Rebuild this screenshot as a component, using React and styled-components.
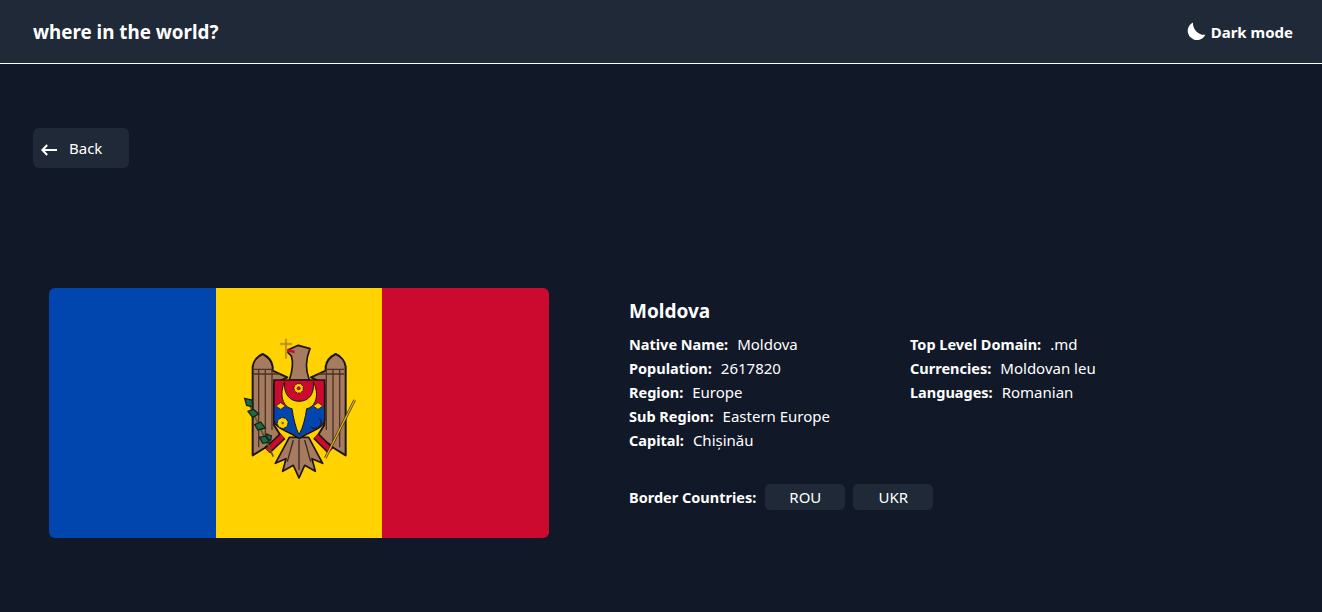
import React from 'react'
import styled, { createGlobalStyle } from 'styled-components';

const GlobalStyle = createGlobalStyle`
  html, body {
    margin: 0;
    background-color: #111827;
  }
  * {
    box-sizing: border-box;
  }
  body {
    font-family: "Noto Sans", "Open Sans", sans-serif;
    color: #fff;
  }
`

const Page = styled.div`
  min-height: 612px;
  background-color: #111827;
`
const Header = styled.header`
  display: flex;
  align-items: center;
  justify-content: space-between;
  height: 64px;
  padding: 0 29px 0 33px;
  background-color: #1f2937;
  border-bottom: 1px solid #fff;
`
const Logo = styled.h1`
  margin: 0;
  font-size: 18.8px;
  font-weight: 700;
`
const ThemeToggle = styled.button`
  display: flex;
  align-items: center;
  gap: 5px;
  padding: 0;
  background: none;
  border: none;
  color: #fff;
  font-family: inherit;
  font-size: 15px;
  font-weight: 700;
  cursor: pointer;
`
const Main = styled.main`
  padding: 64px 33px 0;
`
const BackButton = styled.button`
  display: flex;
  align-items: center;
  gap: 12px;
  width: 96px;
  height: 40px;
  padding: 0 0 0 8px;
  background-color: #1f2937;
  border: none;
  border-radius: 6px;
  color: #fff;
  font-family: inherit;
  font-size: 15px;
  cursor: pointer;
`
const BackArrow = styled.svg`
  margin-top: 3px;
`
const Country = styled.section`
  display: flex;
  align-items: flex-start;
  gap: 80px;
  margin-top: 120px;
  padding-left: 16px;
`
const Flag = styled.div`
  position: relative;
  display: grid;
  grid-template-columns: repeat(3, 1fr);
  flex: none;
  width: 500px;
  height: 250px;
  border-radius: 6px;
  overflow: hidden;
`
const Stripe = styled.div`
  background-color: ${props => props.color};
`
const Arms = styled.svg`
  position: absolute;
  left: 181px;
  top: 42px;
  width: 140px;
  height: 155px;
  filter: blur(0.5px);
`
const Info = styled.div`
  padding-top: 9px;
`
const Title = styled.h2`
  margin: 0 0 7px;
  font-size: 19px;
  line-height: 28px;
  font-weight: 700;
`
const Columns = styled.div`
  display: grid;
  grid-template-columns: 281px 281px;
`
const Row = styled.p`
  display: flex;
  gap: 9px;
  margin: 0;
  font-size: 15px;
  line-height: 24px;
  white-space: nowrap;
`
const Label = styled.span`
  font-size: 14.5px;
  font-weight: 700;
`
const Borders = styled.div`
  display: flex;
  align-items: center;
  margin-top: 32px;
`
const BorderLabel = styled(Label)`
  margin-right: 9px;
  line-height: 24px;
`
const BorderButton = styled.button`
  width: 80px;
  height: 26px;
  margin-right: 8px;
  padding: 0;
  background-color: #1f2937;
  border: none;
  border-radius: 5px;
  color: #fff;
  font-family: inherit;
  font-size: 15px;
  cursor: pointer;
`

const MoonIcon = () => (
  <svg width="19" height="19" viewBox="0 0 19 19" aria-hidden="true">
    <path d="M6 0.4A9.3 9.3 0 1 0 18.4 12.8A11.5 11.5 0 0 1 6 0.4Z" fill="#fff" />
  </svg>
)

const ArrowIcon = () => (
  <BackArrow width="16" height="12" viewBox="0 0 16 12" fill="none" aria-hidden="true">
    <path d="M16 6H1.5M6.2 1L1.4 6L6.2 11" stroke="#fff" strokeWidth="2" />
  </BackArrow>
)

const Wing = () => (
  <g>
    <path d="M68 376V110C70 92 84 78 98 72C114 80 126 94 128 110V122L172 142L132 162V285L155 322L118 342L104 354Z" fill="#a77b5f" stroke="#1c1512" strokeWidth="6" strokeLinejoin="round" />
    <path d="M86 352V120M106 338V120M126 300V120M72 118H126M72 132H150" stroke="#4a3427" strokeWidth="4" fill="none" />
  </g>
)

const CoatOfArms = () => (
  <Arms viewBox="0 0 420 465" aria-hidden="true">
    <Wing />
    <g transform="matrix(-1 0 0 1 415 0)"><Wing /></g>
    {/* neck and head */}
    <path d="M178 150C188 120 190 95 184 78L168 62L205 46L240 56C228 85 226 120 238 150Z" fill="#a77b5f" stroke="#1c1512" strokeWidth="5" strokeLinejoin="round" />
    <path d="M170 60L194 66" stroke="#cc092f" strokeWidth="7" />
    <path d="M168 26V86M150 42H186" stroke="#d9a91c" strokeWidth="7" />
    <path d="M168 26V86M150 42H186" stroke="#8a6a12" strokeWidth="1.5" />
    {/* tail */}
    <path d="M178 322L136 400L168 386L158 424L190 406L207 444L224 406L256 424L246 386L278 400L236 322Z" fill="#a77b5f" stroke="#1c1512" strokeWidth="5" strokeLinejoin="round" />
    <path d="M190 330L172 395M207 330V420M224 330L242 395" stroke="#3b2a20" strokeWidth="4" />
    {/* sceptre and branch */}
    <path d="M112 362L158 318" stroke="#1c1512" strokeWidth="24" />
    <path d="M112 362L158 318" stroke="#cc092f" strokeWidth="15" />
    <path d="M302 362L258 318" stroke="#1c1512" strokeWidth="24" />
    <path d="M302 362L258 318" stroke="#cc092f" strokeWidth="15" />
    <path d="M52 210L130 380" stroke="#5a5a20" strokeWidth="5" />
    <path d="M286 384L374 210" stroke="#3a2f10" strokeWidth="8" />
    <path d="M286 384L374 210" stroke="#e3b21c" strokeWidth="4" />
    <g fill="#1f6b45" stroke="#12261c" strokeWidth="4">
      <path d="M44 205L66 210L68 230L50 226Z" />
      <path d="M54 244L70 238L86 252L68 262Z" />
      <path d="M74 284L92 276L106 294L84 300Z" />
      <path d="M88 322L106 318L118 336L98 340Z" />
      <path d="M110 312L124 318L122 332L112 326Z" />
    </g>
    {/* shield */}
    <path d="M132 150H284V268C284 296 232 306 208 326C184 306 132 296 132 268Z" fill="#cc092f" stroke="#1c1512" strokeWidth="5" />
    <path d="M134 230H282V268C282 294 232 304 208 323C184 304 134 294 134 268Z" fill="#0046ae" />
    {/* aurochs */}
    <path d="M164 156C146 195 160 232 186 236C190 262 196 292 207 314C220 292 226 262 230 236C256 232 270 195 250 156C254 192 236 214 207 214C180 214 160 192 164 156Z" fill="#ffd200" stroke="#1c1512" strokeWidth="3" />
    <circle cx="206" cy="175" r="14" fill="#ffd200" stroke="#1c1512" strokeWidth="3" strokeDasharray="6 3" />
    <circle cx="206" cy="175" r="6" fill="#cc092f" />
    <path d="M138 228L152 218L166 228L152 238ZM250 228L264 218L278 228L264 238Z" fill="#ffd200" stroke="#1c1512" strokeWidth="2" />
    <circle cx="158" cy="279" r="16" fill="#ffd200" stroke="#1c1512" strokeWidth="3" strokeDasharray="9 3" />
    <circle cx="158" cy="279" r="4" fill="#8a6a12" />
    <path d="M268 264A16 16 0 1 1 242 290A18 18 0 0 0 268 264Z" fill="#ffd200" stroke="#1c1512" strokeWidth="2" />
  </Arms>
)

const details = [
  [
    ['Native Name:', 'Moldova'],
    ['Population:', '2617820'],
    ['Region:', 'Europe'],
    ['Sub Region:', 'Eastern Europe'],
    ['Capital:', 'Chișinău'],
  ],
  [
    ['Top Level Domain:', '.md'],
    ['Currencies:', 'Moldovan leu'],
    ['Languages:', 'Romanian'],
  ],
]

export default function App() {
  return (
    <Page>
      <GlobalStyle />
      <Header>
        <Logo>where in the world?</Logo>
        <ThemeToggle><MoonIcon />Dark mode</ThemeToggle>
      </Header>
      <Main>
        <BackButton><ArrowIcon />Back</BackButton>
        <Country>
          <Flag>
            <Stripe color="#0046ae" />
            <Stripe color="#ffd200" />
            <Stripe color="#cc092f" />
            <CoatOfArms />
          </Flag>
          <Info>
            <Title>Moldova</Title>
            <Columns>
              {details.map((column, i) => (
                <div key={i}>
                  {column.map(([label, value]) => (
                    <Row key={label}><Label>{label}</Label><span>{value}</span></Row>
                  ))}
                </div>
              ))}
            </Columns>
            <Borders>
              <BorderLabel>Border Countries:</BorderLabel>
              <BorderButton>ROU</BorderButton>
              <BorderButton>UKR</BorderButton>
            </Borders>
          </Info>
        </Country>
      </Main>
    </Page>
  )
}
